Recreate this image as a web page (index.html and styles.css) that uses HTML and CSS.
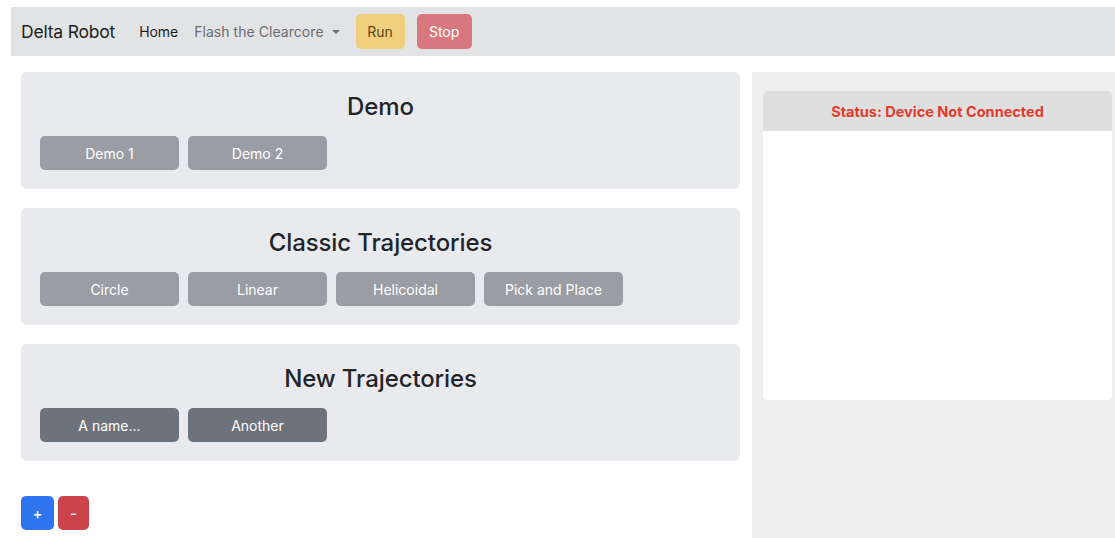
FILE: index.html
```html
<!DOCTYPE html>
<html lang="en">
<head>
<meta charset="utf-8">
<title>Delta Robot</title>
<link rel="stylesheet" href="styles.css">
</head>
<body>
  <nav class="navbar">
    <span class="brand">Delta Robot</span>
    <a class="nav-link active">Home</a>
    <a class="nav-link dropdown">Flash the Clearcore<span class="caret"></span></a>
    <button class="btn btn-run">Run</button>
    <button class="btn btn-stop">Stop</button>
  </nav>

  <div class="layout">
    <main class="groups">
      <section class="group">
        <h2 class="group-title">Demo</h2>
        <div class="btn-row">
          <button class="btn btn-traj">Demo 1</button>
          <button class="btn btn-traj">Demo 2</button>
        </div>
      </section>

      <section class="group">
        <h2 class="group-title">Classic Trajectories</h2>
        <div class="btn-row">
          <button class="btn btn-traj">Circle</button>
          <button class="btn btn-traj">Linear</button>
          <button class="btn btn-traj">Helicoidal</button>
          <button class="btn btn-traj">Pick and Place</button>
        </div>
      </section>

      <section class="group">
        <h2 class="group-title">New Trajectories</h2>
        <div class="btn-row">
          <button class="btn btn-traj btn-custom">A name...</button>
          <button class="btn btn-traj btn-custom">Another</button>
        </div>
      </section>

      <div class="edit-row">
        <button class="btn btn-add">+</button>
        <button class="btn btn-remove">-</button>
      </div>
    </main>

    <aside class="sidebar">
      <div class="status-card">
        <div class="status-header">Status: Device Not Connected</div>
        <div class="status-body"></div>
      </div>
    </aside>
  </div>
</body>
</html>
```

FILE: styles.css
```css
* {
  box-sizing: border-box;
}

html, body {
  height: 100%;
}

body {
  margin: 0;
  padding: 7px 0 0 11px;
  font-family: Inter, "Liberation Sans", sans-serif;
  color: #212529;
  background: #ffffff;
  display: flex;
  flex-direction: column;
  overflow: hidden;
}

/* top navigation bar */
.navbar {
  height: 49px;
  flex: none;
  background: #e2e3e5;
  display: flex;
  align-items: center;
  padding-left: 10px;
}

.brand {
  font-size: 17.5px;
  color: #1d1f22;
  letter-spacing: -0.2px;
  margin-right: 24px;
}

.nav-link {
  font-size: 14px;
  color: #6a6d71;
  margin-right: 16px;
  letter-spacing: -0.05px;
}

.nav-link.active {
  color: #1d1f22;
}

.nav-link.dropdown {
  display: inline-flex;
  align-items: center;
  margin-right: 16px;
  letter-spacing: 0.05px;
}

.caret {
  display: inline-block;
  margin-left: 8px;
  border-top: 4px solid #6a6d71;
  border-left: 4px solid transparent;
  border-right: 4px solid transparent;
}

.btn {
  border: 0;
  border-radius: 5px;
  font-family: inherit;
  font-size: 14px;
  cursor: pointer;
  padding: 0;
}

.btn-run {
  width: 49px;
  height: 35px;
  background: #efcf7b;
  color: #5b4a1e;
  margin-right: 12px;
}

.btn-stop {
  width: 55px;
  height: 35px;
  background: #d8787e;
  color: #ffffff;
}

/* page body: groups column + status sidebar */
.layout {
  flex: 1;
  display: flex;
  margin-top: 16px;
  min-height: 0;
}

.groups {
  width: 741px;
  padding: 0 12px 0 10px;
}

.group {
  background: #e9eaee;
  border-radius: 6px;
  padding: 20px 19px 19px;
  margin-bottom: 19px;
}

.group-title {
  margin: 0 0 15px;
  text-align: center;
  font-size: 24px;
  font-weight: 500;
  line-height: 29px;
  color: #212529;
  letter-spacing: -0.1px;
}

.btn-row {
  display: flex;
  gap: 9px;
}

.btn-traj {
  width: 139px;
  height: 34px;
  background: #9a9ea4;
  color: #ffffff;
}

.btn-custom {
  background: #6d737a;
}

.edit-row {
  display: flex;
  gap: 4px;
  margin-top: 35px;
}

.btn-add,
.btn-remove {
  height: 34px;
  color: #ffffff;
  font-size: 15px;
  font-weight: 500;
}

.btn-add {
  width: 33px;
  background: #2f74ef;
}

.btn-remove {
  width: 31px;
  background: #cb444b;
}

/* status sidebar */
.sidebar {
  flex: 1;
  background: #efefef;
  padding: 19px 3px 0 11px;
}

.status-card {
  background: #ffffff;
  border-radius: 5px;
  overflow: hidden;
}

.status-header {
  height: 40px;
  background: #dfdfdf;
  display: flex;
  align-items: center;
  justify-content: center;
  font-size: 14.5px;
  font-weight: 700;
  color: #e5392c;
}

.status-body {
  height: 269px;
  background: #ffffff;
}
```
